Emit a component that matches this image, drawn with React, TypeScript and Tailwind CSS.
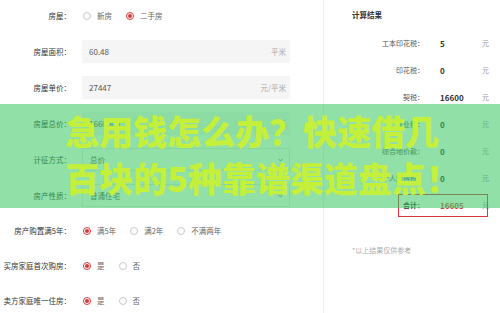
import React from "react";

function Radio({ checked, label }: { checked?: boolean; label: string }) {
  return (
    <div className="flex items-center">
      <span
        className={
          checked
            ? "w-[8px] h-[8px] rounded-full border border-[#d9383a] flex items-center justify-center bg-white"
            : "w-[8px] h-[8px] rounded-full border border-[#c8c8c8] bg-white"
        }
      >
        {checked ? <span className="w-[4px] h-[4px] rounded-full bg-[#d9383a]" /> : null}
      </span>
      <span className="ml-[6px] text-[7.5px] text-[#666] leading-none">{label}</span>
    </div>
  );
}

function Label({ text }: { text: string }) {
  return <div className="w-[71px] shrink-0 text-right text-[7.5px] text-[#333] leading-none whitespace-nowrap">{text}</div>;
}

function RadioRow({ label, options, checkedIndex, className }: { label: string; options: string[]; checkedIndex: number; className?: string }) {
  return (
    <div className={"flex items-center h-[23px] " + (className ?? "")}>
      <Label text={label} />
      <div className="ml-[12px] flex items-center gap-[14px]">
        {options.map((o, i) => (
          <Radio key={o} label={o} checked={i === checkedIndex} />
        ))}
      </div>
    </div>
  );
}

function InputRow({ label, value, suffix, className }: { label: string; value: string; suffix: string; className?: string }) {
  return (
    <div className={"flex items-center h-[23px] " + (className ?? "")}>
      <Label text={label} />
      <div className="ml-[11px] w-[208px] h-[23px] bg-[#f5f5f5] flex items-center justify-between pl-[7px] pr-[4px]">
        <span className="text-[8px] text-[#555] leading-none">{value}</span>
        <span className="text-[7.5px] text-[#aaa] leading-none">{suffix}</span>
      </div>
    </div>
  );
}

function SelectRow({ label, value, className }: { label: string; value: string; className?: string }) {
  return (
    <div className={"flex items-center h-[23px] " + (className ?? "")}>
      <Label text={label} />
      <div className="ml-[11px] w-[208px] h-[23px] bg-white border border-[#e6e6e6] flex items-center justify-between pl-[7px] pr-[6px]">
        <span className="text-[7.5px] text-[#555] leading-none">{value}</span>
        <svg width="5" height="4" viewBox="0 0 5 4">
          <path d="M0.5 0.8 L2.5 3 L4.5 0.8" fill="none" stroke="#777" strokeWidth="0.9" />
        </svg>
      </div>
    </div>
  );
}

function ResultRow({ label, value, bold, red }: { label: string; value: string; bold?: boolean; red?: boolean }) {
  return (
    <div className="flex items-center h-[27px] relative">
      {red ? <span className="absolute left-[74px] top-[2px] w-[90px] h-[23px] border-[1.5px] border-[#d9363a]" /> : null}
      <div className={"w-[100px] text-right text-[7px] leading-none whitespace-nowrap " + (bold ? "font-bold text-[#333]" : "text-[#555]")}>{label}</div>
      <div className={"ml-[16px] w-[42px] text-[8px] font-bold leading-none " + (red ? "text-[#d8453c]" : "text-[#333]")}>{value}</div>
      <div className="text-[7px] text-[#999] leading-none">元</div>
    </div>
  );
}

export default function App() {
  return (
    <div className="relative w-[500px] h-[313px] bg-white overflow-hidden font-['Noto_Sans_CJK_SC','Noto_Sans',sans-serif]">
      <div className="flex h-full">
        <div className="w-[324px] h-full border-r border-[#eeeeee] pt-[4px] flex flex-col">
          <RadioRow label="房屋：" options={["新房", "二手房"]} checkedIndex={1} />
          <InputRow className="mt-[13px]" label="房屋面积：" value="60.48" suffix="平米" />
          <InputRow className="mt-[13px]" label="房屋单价：" value="27447" suffix="元/平米" />
          <InputRow className="mt-[13px]" label="房屋总价：" value="1660000" suffix="元" />
          <SelectRow className="mt-[13px]" label="计征方式：" value="总价" />
          <SelectRow className="mt-[13px]" label="房产性质：" value="普通住宅" />
          <RadioRow className="mt-[12px]" label="房产购置满5年：" options={["满5年", "满2年", "不满两年"]} checkedIndex={0} />
          <RadioRow className="mt-[12px]" label="买房家庭首次购房：" options={["是", "否"]} checkedIndex={0} />
          <RadioRow className="mt-[12px]" label="卖方家庭唯一住房：" options={["是", "否"]} checkedIndex={0} />
        </div>
        <div className="flex-1 flex flex-col">
          <div className="h-[30px] flex items-center pl-[28px] text-[7.5px] font-bold text-[#333] leading-none">计算结果</div>
          <ResultRow label="工本印花税：" value="5" />
          <ResultRow label="印花税：" value="0" />
          <ResultRow label="契税：" value="16600" />
          <ResultRow label="营业税：" value="0" />
          <ResultRow label="综合地价款：" value="0" />
          <ResultRow label="个人所得税：" value="0" />
          <ResultRow label="合计：" value="16605" bold red />
          <div className="mt-[26px] pl-[28px] text-[7px] text-[#aaa] leading-[10px]">*以上结果仅供参考</div>
        </div>
      </div>
      <div className="absolute left-0 right-0 top-[104px] h-[104px] bg-[rgba(52,199,97,0.55)]">
        <div className="pl-[65px] pt-[3px] text-[34px] leading-[47px] font-black text-[#c4ef3b] whitespace-nowrap">
          <div>急用钱怎么办？快速借几</div>
          <div>百块的5种靠谱渠道盘点！</div>
        </div>
      </div>
    </div>
  );
}
